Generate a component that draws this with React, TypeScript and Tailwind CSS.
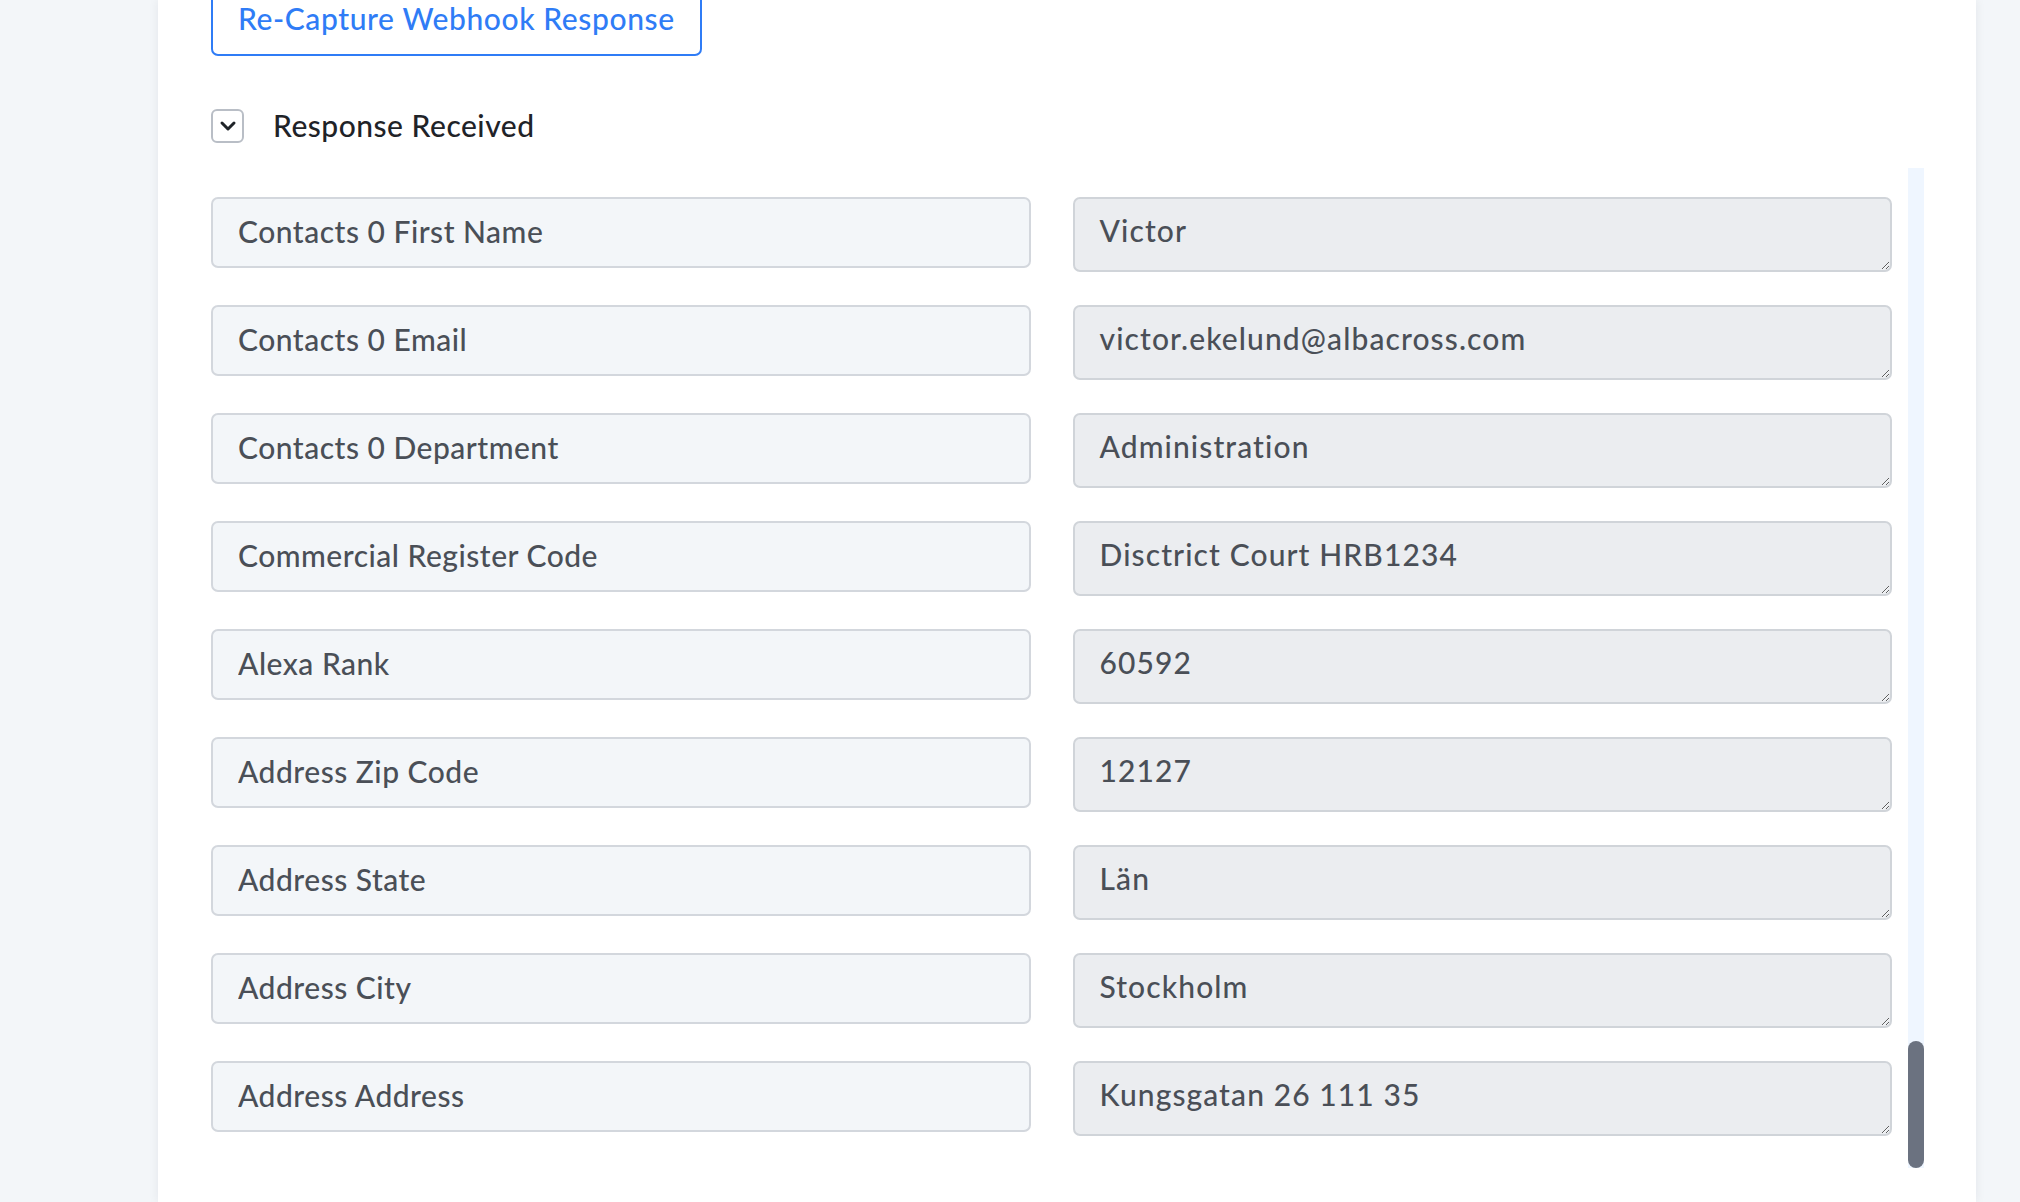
import React from "react";

const rows: { label: string; value: string }[] = [
  { label: "Contacts 0 First Name", value: "Victor" },
  { label: "Contacts 0 Email", value: "victor.ekelund@albacross.com" },
  { label: "Contacts 0 Department", value: "Administration" },
  { label: "Commercial Register Code", value: "Disctrict Court HRB1234" },
  { label: "Alexa Rank", value: "60592" },
  { label: "Address Zip Code", value: "12127" },
  { label: "Address State", value: "Län" },
  { label: "Address City", value: "Stockholm" },
  { label: "Address Address", value: "Kungsgatan 26 111 35" },
];

function ChevronBox() {
  return (
    <button
      type="button"
      className="flex h-[34px] w-[33px] items-center justify-center rounded-[6px] border-2 border-[#b9bec6] bg-white text-[#1f2328]"
      aria-label="Toggle response"
    >
      <svg
        width="24"
        height="24"
        viewBox="0 0 24 24"
        fill="none"
        stroke="currentColor"
        strokeWidth="3"
        strokeLinecap="round"
        strokeLinejoin="round"
      >
        <path d="m6 9 6 6 6-6" />
      </svg>
    </button>
  );
}

function FieldRow({ label, value }: { label: string; value: string }) {
  return (
    <div className="grid grid-cols-2 items-start gap-x-[42px]">
      <input
        readOnly
        value={label}
        className="h-[71px] w-full rounded-[7px] border-2 border-[#d3d7dd] bg-[#f3f6f9] px-[25px] pb-[3px] text-[30px] font-medium tracking-[0.5px] text-[#4a4f57] outline-none"
      />
      <textarea
        readOnly
        rows={1}
        defaultValue={value}
        className="h-[75px] w-full rounded-[7px] border-2 border-[#d0d4d9] bg-[#ebedf0] px-[25px] pt-[9px] pb-[15px] text-[30px] font-medium leading-[45px] tracking-[1.1px] text-[#4a4f57] outline-none"
      />
    </div>
  );
}

export default function App() {
  return (
    <div
      className="flex h-[1202px] w-full overflow-hidden bg-[#f3f6f9] pl-[158px] pr-[44px]"
      style={{ fontFamily: "Lato, 'Open Sans', sans-serif" }}
    >
      <div className="flex flex-1 flex-col bg-white pl-[53px] pr-[52px] shadow-[0_0_10px_rgba(15,23,42,0.07)]">
        {/* Кнопка повторного захвата */}
        <div className="-mt-[20px]">
          <button
            type="button"
            className="h-[76px] rounded-[7px] border-2 border-[#2f7cf6] bg-white px-[25px] text-[30px] font-medium tracking-[0.6px] text-[#2f7cf6]"
          >
            Re-Capture Webhook Response
          </button>
        </div>

        {/* Заголовок ответа */}
        <div className="mt-[47px] flex items-center gap-[29px]">
          <ChevronBox />
          <span className="text-[30px] font-medium tracking-[0.5px] text-[#1f2328]">
            Response Received
          </span>
        </div>

        {/* Список полей + полоса прокрутки */}
        <div className="mt-[20px] flex h-[1000px] gap-[16px] overflow-hidden">
          <div className="flex flex-1 flex-col gap-[33px] pb-[33px] pt-[29px]">
            {rows.map((r) => (
              <FieldRow key={r.label} label={r.label} value={r.value} />
            ))}
          </div>
          <div className="flex w-[16px] flex-col justify-end bg-[#eff6ff]">
            <div className="h-[127px] w-full rounded-full bg-[#6b7280]" />
          </div>
        </div>
      </div>
    </div>
  );
}
